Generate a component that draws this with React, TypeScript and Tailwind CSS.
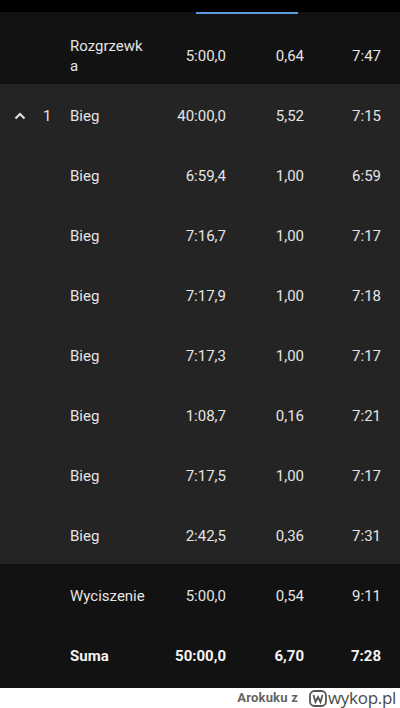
import React from 'react';

interface Row {
  chevron?: boolean;
  idx?: string;
  name: string;
  time: string;
  dist: string;
  pace: string;
  bold?: boolean;
}

const warmup: Row = { name: 'Rozgrzewka', time: '5:00,0', dist: '0,64', pace: '7:47' };

const intervals: Row[] = [
  { chevron: true, idx: '1', name: 'Bieg', time: '40:00,0', dist: '5,52', pace: '7:15' },
  { name: 'Bieg', time: '6:59,4', dist: '1,00', pace: '6:59' },
  { name: 'Bieg', time: '7:16,7', dist: '1,00', pace: '7:17' },
  { name: 'Bieg', time: '7:17,9', dist: '1,00', pace: '7:18' },
  { name: 'Bieg', time: '7:17,3', dist: '1,00', pace: '7:17' },
  { name: 'Bieg', time: '1:08,7', dist: '0,16', pace: '7:21' },
  { name: 'Bieg', time: '7:17,5', dist: '1,00', pace: '7:17' },
  { name: 'Bieg', time: '2:42,5', dist: '0,36', pace: '7:31' },
];

const tail: Row[] = [
  { name: 'Wyciszenie', time: '5:00,0', dist: '0,54', pace: '9:11' },
  { name: 'Suma', time: '50:00,0', dist: '6,70', pace: '7:28', bold: true },
];

function LapRow({ row, tall }: { row: Row; tall?: boolean }) {
  return (
    <div
      className={`grid grid-cols-[36px_34px_80px_76px_78px_77px] items-center ${
        tall ? 'pt-[22px] pb-[8px]' : 'h-[60px] pt-[4px]'
      } ${row.bold ? 'font-bold text-[#f2f2f2]' : 'text-[#e4e4e4]'}`}
    >
      <div className="flex justify-center pl-[4px]">
        {row.chevron && (
          <svg width="12" height="8" viewBox="0 0 12 8" fill="none">
            <polyline points="1.5,6.5 6,2 10.5,6.5" stroke="#e4e4e4" strokeWidth="2" />
          </svg>
        )}
      </div>
      <div className="pl-[7px]">{row.idx}</div>
      <div className="break-all leading-[20px]">{row.name}</div>
      <div className="text-right">{row.time}</div>
      <div className="text-right">{row.dist}</div>
      <div className="text-right">{row.pace}</div>
    </div>
  );
}

export default function App() {
  return (
    <div className="w-[400px] h-[708px] flex flex-col bg-[#121212] text-[15px] font-['Roboto',sans-serif] overflow-hidden">
      {/* tab strip */}
      <div className="h-[12px] bg-black" />
      <div className="h-[2px] bg-[#121212] pl-[196px]">
        <div className="h-[2px] w-[102px] bg-[#5c9be0]" />
      </div>

      <div className="bg-[#121212]">
        <LapRow row={warmup} tall />
      </div>

      <div className="bg-[#242424]">
        {intervals.map((r, i) => (
          <LapRow key={i} row={r} />
        ))}
      </div>

      <div className="bg-[#121212] pb-[4px]">
        {tail.map((r, i) => (
          <LapRow key={i} row={r} />
        ))}
      </div>

      {/* watermark */}
      <div className="flex-1 bg-white flex items-center justify-end pr-[4px] gap-[11px]">
        <span className="font-['Roboto',sans-serif] font-bold text-[13px] text-[#646464] tracking-[0.2px]">Arokuku z</span>
        <div className="flex items-center gap-[1px]">
          <svg width="18" height="17" viewBox="0 0 18 17" fill="none">
            <rect x="1" y="1" width="16" height="15" rx="4.5" stroke="#555" strokeWidth="1.8" />
            <polyline points="4.5,5 6.5,12 9,7 11.5,12 13.5,5" stroke="#555" strokeWidth="1.8" fill="none" />
          </svg>
          <span className="font-['Open_Sans',sans-serif] text-[17px] leading-[18px] text-[#4a4a4a] tracking-[-0.3px]">wykop.pl</span>
        </div>
      </div>
    </div>
  );
}
